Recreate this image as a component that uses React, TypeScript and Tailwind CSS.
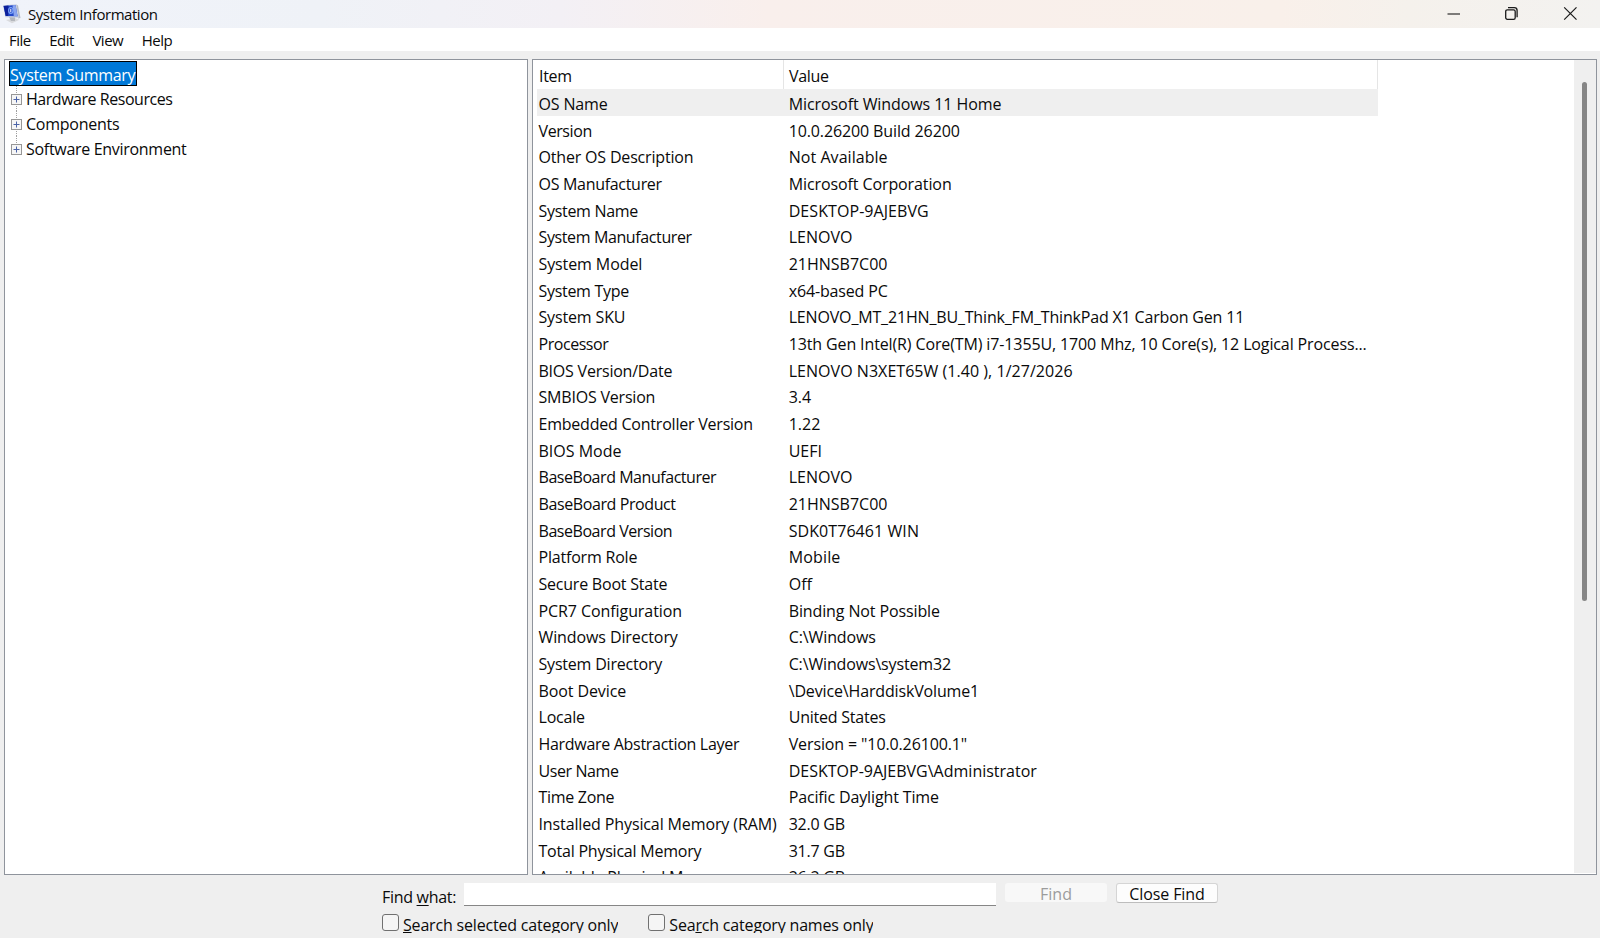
import React from 'react';

interface InfoRow {
  item: string;
  value: string;
  itemClass?: string;
  valueClass?: string;
}

const rows: InfoRow[] = [
  { item: 'OS Name', value: 'Microsoft Windows 11 Home', itemClass: 'tracking-[-0.15px]', valueClass: 'tracking-[-0.08px]' },
  { item: 'Version', value: '10.0.26200 Build 26200', itemClass: 'tracking-[-0.4px]', valueClass: 'tracking-[-0.12px]' },
  { item: 'Other OS Description', value: 'Not Available', itemClass: 'tracking-[-0.18px]', valueClass: 'tracking-[0.05px]' },
  { item: 'OS Manufacturer', value: 'Microsoft Corporation', itemClass: 'tracking-[-0.3px]', valueClass: 'tracking-[-0.1px]' },
  { item: 'System Name', value: 'DESKTOP-9AJEBVG', itemClass: 'tracking-[-0.3px]', valueClass: 'tracking-[0.07px]' },
  { item: 'System Manufacturer', value: 'LENOVO', itemClass: 'tracking-[-0.38px]' },
  { item: 'System Model', value: '21HNSB7C00', itemClass: 'tracking-[-0.1px]' },
  { item: 'System Type', value: 'x64-based PC', itemClass: 'tracking-[-0.3px]', valueClass: 'tracking-[-0.15px]' },
  { item: 'System SKU', value: 'LENOVO_MT_21HN_BU_Think_FM_ThinkPad X1 Carbon Gen 11', itemClass: 'tracking-[-0.15px]', valueClass: 'tracking-[-0.17px]' },
  { item: 'Processor', value: '13th Gen Intel(R) Core(TM) i7-1355U, 1700 Mhz, 10 Core(s), 12 Logical Process...', itemClass: 'tracking-[-0.45px]', valueClass: 'tracking-[-0.125px]' },
  { item: 'BIOS Version/Date', value: 'LENOVO N3XET65W (1.40 ), 1/27/2026', itemClass: 'tracking-[-0.22px]', valueClass: 'tracking-[0.04px]' },
  { item: 'SMBIOS Version', value: '3.4', itemClass: 'tracking-[-0.2px]' },
  { item: 'Embedded Controller Version', value: '1.22', itemClass: 'tracking-[-0.22px]' },
  { item: 'BIOS Mode', value: 'UEFI' },
  { item: 'BaseBoard Manufacturer', value: 'LENOVO', itemClass: 'tracking-[-0.45px]' },
  { item: 'BaseBoard Product', value: '21HNSB7C00', itemClass: 'tracking-[-0.4px]' },
  { item: 'BaseBoard Version', value: 'SDK0T76461 WIN', itemClass: 'tracking-[-0.45px]', valueClass: 'tracking-[0.07px]' },
  { item: 'Platform Role', value: 'Mobile', itemClass: 'tracking-[-0.2px]', valueClass: 'tracking-[0.15px]' },
  { item: 'Secure Boot State', value: 'Off', itemClass: 'tracking-[-0.22px]' },
  { item: 'PCR7 Configuration', value: 'Binding Not Possible', itemClass: 'tracking-[-0.08px]', valueClass: 'tracking-[-0.12px]' },
  { item: 'Windows Directory', value: 'C:\\Windows', itemClass: 'tracking-[-0.1px]', valueClass: 'tracking-[-0.1px]' },
  { item: 'System Directory', value: 'C:\\Windows\\system32', itemClass: 'tracking-[-0.2px]', valueClass: 'tracking-[-0.15px]' },
  { item: 'Boot Device', value: '\\Device\\HarddiskVolume1', itemClass: 'tracking-[-0.1px]', valueClass: 'tracking-[-0.15px]' },
  { item: 'Locale', value: 'United States', itemClass: 'tracking-[-0.2px]', valueClass: 'tracking-[-0.22px]' },
  { item: 'Hardware Abstraction Layer', value: 'Version = "10.0.26100.1"', itemClass: 'tracking-[-0.3px]', valueClass: 'tracking-[-0.12px]' },
  { item: 'User Name', value: 'DESKTOP-9AJEBVG\\Administrator', itemClass: 'tracking-[-0.4px]' },
  { item: 'Time Zone', value: 'Pacific Daylight Time', itemClass: 'tracking-[-0.3px]', valueClass: 'tracking-[-0.14px]' },
  { item: 'Installed Physical Memory (RAM)', value: '32.0 GB', itemClass: 'tracking-[-0.12px]', valueClass: 'tracking-[-0.25px]' },
  { item: 'Total Physical Memory', value: '31.7 GB', itemClass: 'tracking-[-0.22px]', valueClass: 'tracking-[-0.25px]' },
  { item: 'Available Physical Memory', value: '26.2 GB', itemClass: 'tracking-[-0.22px]', valueClass: 'tracking-[-0.25px]' },
];

const AppIcon: React.FC = () => (
  <svg width="18" height="20" viewBox="0 0 18 20" className="mb-px">
    <path d="M3 16 L12 14 L16.500 15.800 L9 19.300 Z" fill="#d9dadd" />
    <path d="M6 13 L12 13 L12 17 L8 17 Z" fill="#b4b7bd" />
    <path d="M13 0.500 L15 1.500 L17.500 14 L15 14.500 Z" fill="#b4bac6" />
    <path d="M0 1.300 L13.300 0.300 L16 13.800 L2.300 13.200 Z" fill="#c9d0e0" />
    <path d="M0.600 2 L12.600 1 L14.600 12.300 L2.700 11.900 Z" fill="#2348c8" />
    <path d="M9.500 1.300 L12.600 1 L14.600 12.300 L10.800 12.200 Z" fill="#8ba5ee" />
    <path d="M0.600 2 L5.500 1.600 L5.200 12 L2.700 11.900 Z" fill="#0b1f9c" />
    <ellipse cx="7.800" cy="6.500" rx="2.200" ry="3" fill="none" stroke="#7fa6fa" strokeWidth="1.100" />
    <path d="M7.800 4.800 V8.200" stroke="#fff" strokeWidth="1" />
  </svg>
);

const WindowControls: React.FC = () => (
  <div className="flex h-7 items-center gap-11 pb-px pr-[23px]">
    <svg width="14" height="14" viewBox="0 0 14 14">
      <path d="M0.500 7 H13" stroke="#1a1a1a" strokeWidth="1.100" />
    </svg>
    <svg width="14" height="14" viewBox="0 0 14 14" fill="none" stroke="#1a1a1a" strokeWidth="1.300">
      <rect x="0.700" y="2.800" width="9.500" height="9.500" rx="1.600" />
      <path d="M3 0.700 H9.300 A2.800 2.800 0 0 1 12.100 3.500 V10.200" />
    </svg>
    <svg width="14" height="14" viewBox="0 0 14 14">
      <path d="M1.200 0.400 L13.500 12.700 M13.500 0.400 L1.200 12.700" stroke="#1a1a1a" strokeWidth="1.200" />
    </svg>
  </div>
);

const TreeNode: React.FC<{ label: string; className: string; last?: boolean }> = ({ label, className, last }) => (
  <div className="flex h-[25px] items-center">
    <svg width="11" height="25" viewBox="0 0 11 25" className="mr-1">
      <path d={last ? 'M5.500 0 V12' : 'M5.500 0 V25'} stroke="#a0a0a0" strokeDasharray="1 1" />
      <rect x="0.500" y="8.500" width="10" height="10" fill="#f6f6f6" stroke="#979797" />
      <path d="M2.500 13.500 H8.500 M5.500 10.500 V16.500" stroke="#4b63a7" />
    </svg>
    <span className={`pt-px ${className}`}>{label}</span>
  </div>
);

interface CheckOptionProps {
  before?: string;
  hotkey: string;
  after: string;
}

const CheckOption: React.FC<CheckOptionProps> = ({ before = '', hotkey, after }) => (
  <label className="flex items-start">
    <span className="mr-1 h-[17px] w-[17px] rounded-[3px] border border-[#707070] bg-[#f5f5f5]" />
    <span className="mt-[2px] h-[17px] overflow-hidden leading-[18px] tracking-[-0.18px]">
      {before}
      <span className="underline underline-offset-1">{hotkey}</span>
      {after}
    </span>
  </label>
);

export default function App() {
  return (
    <div className="flex h-[938px] w-[1600px] flex-col overflow-hidden whitespace-nowrap bg-[#efefef] font-['Open_Sans',sans-serif] text-[16px] text-[#0a0a0a]">
      <header className="flex h-7 shrink-0 items-center justify-between bg-[linear-gradient(90deg,#f0f3fa_0%,#eff2f7_20%,#f3f0f5_35%,#f9efec_48%,#f9f0ea_80%,#f5f1ec_88%,#f3f2f0_100%)]">
        <div className="flex items-center pl-[3px]">
          <AppIcon />
          <span className="ml-[7px] text-[15px] tracking-[-0.45px]">System Information</span>
        </div>
        <WindowControls />
      </header>

      <nav className="flex h-[23px] shrink-0 items-center gap-[18.500px] bg-white pl-[9px] pt-px text-[15px] tracking-[-0.5px]">
        <span>File</span>
        <span>Edit</span>
        <span>View</span>
        <span>Help</span>
      </nav>

      <main className="mt-2 flex h-[816px] shrink-0 gap-1 pl-1">
        <section className="w-[524px] border border-[#8f949c] bg-white pl-[4px] pt-px">
          <div className="flex h-[25px] w-[128px] items-center border border-black bg-[#0078d7] pt-[2px] tracking-[-0.32px] text-white">
            System Summary
          </div>
          <div className="pl-[2px]">
            <TreeNode label="Hardware Resources" className="tracking-[-0.46px]" />
            <TreeNode label="Components" className="tracking-[-0.25px]" />
            <TreeNode label="Software Environment" className="tracking-[-0.3px]" last />
          </div>
        </section>

        <section className="flex w-[1065px] justify-between overflow-hidden border border-[#8f949c] bg-white">
          <div className="w-[845px] pl-[4px]">
            <div className="flex h-[29px] items-center">
              <div className="flex h-full w-[247px] items-center border-r border-[#e5e5e5] pl-[2px] pt-[2px] tracking-[-0.3px]">Item</div>
              <div className="flex h-full flex-1 items-center border-r border-[#e5e5e5] pl-[5px] pt-[2px] tracking-[-0.3px]">Value</div>
            </div>
            {rows.map((row, i) => (
              <div key={row.item} className={`flex h-[26.67px] items-center pt-[3.600px] ${i === 0 ? 'bg-[#efefef]' : ''}`}>
                <div className={`w-[247px] pl-[1.500px] ${row.itemClass ?? ''}`}>{row.item}</div>
                <div className={`pl-[4.700px] ${row.valueClass ?? ''}`}>{row.value}</div>
              </div>
            ))}
          </div>
          <div className="mb-px w-[22px] bg-[#efefef] pl-2 pt-[22px]">
            <div className="h-[519px] w-[5px] rounded-full bg-[#868686]" />
          </div>
        </section>
      </main>

      <footer className="flex flex-col">
        <div className="mt-2 flex h-6 items-start pl-[382px]">
          <span className="w-[82px] pt-[2px] tracking-[-0.3px]">
            Find <span className="underline underline-offset-2">w</span>hat:
          </span>
          <input className="h-[23px] w-[532px] border-b border-[#868686] bg-white outline-none" />
          <button className="ml-[9px] h-[19px] w-[102px] rounded-[3px] bg-[#f8f8f8] leading-[22px] text-[#9c9c9c]">Find</button>
          <button className="ml-[9px] h-[20px] w-[102px] rounded-[3px] border border-[#d5d5d5] border-b-[#bdbdbd] bg-[#fdfdfd] leading-[21px] tracking-[-0.1px]">Close Find</button>
        </div>
        <div className="mt-[7px] flex gap-[30px] pl-[382px]">
          <CheckOption hotkey="S" after="earch selected category only" />
          <CheckOption before="Sea" hotkey="r" after="ch category names only" />
        </div>
      </footer>
    </div>
  );
}
